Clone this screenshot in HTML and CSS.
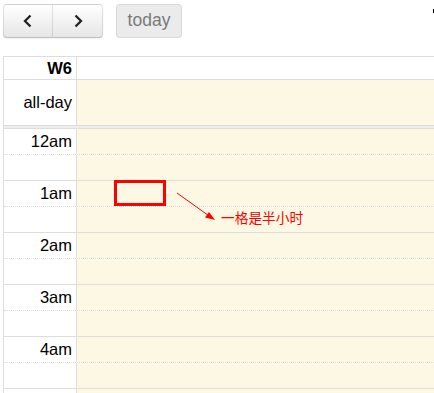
FILE: index.html
```html
<!DOCTYPE html>
<html>
<head>
<meta charset="utf-8">
<link rel="stylesheet" href="styles.css">
</head>
<body>
<div class="cal">
  <div class="toolbar">
    <div class="btn-group">
      <button class="btn nav" aria-label="prev">
        <svg width="12" height="14" viewBox="0 0 12 14"><path d="M8.5 1.5 L3 7 L8.5 12.5" fill="none" stroke="#222" stroke-width="2.3"/></svg>
      </button>
      <button class="btn nav" aria-label="next">
        <svg width="12" height="14" viewBox="0 0 12 14"><path d="M3.5 1.5 L9 7 L3.5 12.5" fill="none" stroke="#222" stroke-width="2.3"/></svg>
      </button>
    </div>
    <button class="btn today" disabled>today</button>
    <span class="title-edge"></span>
  </div>

  <div class="grid">
    <div class="row head">
      <div class="axis wk">W6</div>
      <div class="day"></div>
    </div>
    <div class="row allday">
      <div class="axis">all-day</div>
      <div class="day today-col"></div>
    </div>
    <div class="divider"></div>
    <div class="slots">
      <div class="slot hour"><div class="axis">12am</div><div class="day today-col"></div></div>
      <div class="slot half"><div class="axis"></div><div class="day today-col"></div></div>
      <div class="slot hour"><div class="axis">1am</div><div class="day today-col"></div></div>
      <div class="slot half"><div class="axis"></div><div class="day today-col"></div></div>
      <div class="slot hour"><div class="axis">2am</div><div class="day today-col"></div></div>
      <div class="slot half"><div class="axis"></div><div class="day today-col"></div></div>
      <div class="slot hour"><div class="axis">3am</div><div class="day today-col"></div></div>
      <div class="slot half"><div class="axis"></div><div class="day today-col"></div></div>
      <div class="slot hour"><div class="axis">4am</div><div class="day today-col"></div></div>
      <div class="slot half"><div class="axis"></div><div class="day today-col"></div></div>
      <div class="slot hour"><div class="axis"></div><div class="day today-col"></div></div>

      <div class="mark-box"></div>
      <svg class="mark-arrow" width="50" height="34" viewBox="0 0 50 34">
        <line x1="1" y1="1" x2="36" y2="26" stroke="#f00" stroke-width="1"/>
        <polygon points="39,28 29,25.5 33,20" fill="#f00"/>
      </svg>
      <div class="mark-note">一格是半小时</div>
    </div>
  </div>
</div>
</body>
</html>
```

FILE: styles.css
```css
html, body {
  margin: 0;
  padding: 0;
  overflow: hidden;
  background: #fff;
}
body {
  font-family: "Liberation Sans", Arial, sans-serif;
  font-size: 16px;
  color: #000;
}
.cal {
  padding: 4px 0 0 3px;
  width: 440px;
}
.toolbar {
  display: flex;
  align-items: flex-start;
  height: 34px;
  margin-bottom: 18px;
  position: relative;
}
.btn-group {
  display: flex;
}
.btn {
  font-family: "Liberation Sans", Arial, sans-serif;
  font-size: 17px;
  height: 34px;
  margin: 0;
  padding: 0;
  box-sizing: border-box;
  border: 1px solid rgba(0,0,0,0.1);
  border-bottom-color: rgba(0,0,0,0.25);
  background-color: #f5f5f5;
  background-image: linear-gradient(to bottom, #fff, #e6e6e6);
  color: #333;
  box-shadow: inset 0 1px 0 rgba(255,255,255,0.2), 0 1px 2px rgba(0,0,0,0.05);
  display: flex;
  align-items: center;
  justify-content: center;
}
.nav {
  width: 50px;
}
.nav:first-child {
  border-radius: 4px 0 0 4px;
}
.nav:last-child {
  border-radius: 0 4px 4px 0;
  margin-left: -1px;
  width: 51px;
}
.today {
  margin-left: 13px;
  width: 66px;
  border-radius: 4px;
  background-image: none;
  background-color: #ebebeb;
  color: #7a7a7a;
  border-color: rgba(0,0,0,0.08);
  box-shadow: none;
  padding-bottom: 2px;
  font-size: 17.5px;
}
.title-edge {
  position: absolute;
  left: 430px;
  top: 5px;
  width: 2px;
  height: 4px;
  background: #000;
}

.grid {
  width: 432px;
  border: 1px solid #ddd;
  border-bottom: none;
  box-sizing: border-box;
}
.row, .slot {
  display: flex;
}
.axis {
  flex: none;
  border-right: 1px solid #ddd;
  padding-right: 4px;
  box-sizing: border-box;
  width: 73px;
  display: flex;
  align-items: center;
  justify-content: flex-end;
  font-size: 16.5px;
}
.day {
  flex: 1;
}
.today-col {
  background: #fcf8e3;
}
.head {
  height: 22px;
  border-bottom: 1px solid #ddd;
}
.wk {
  font-weight: bold;
}
.allday {
  height: 45px;
}
.divider {
  height: 2px;
  background: #eee;
  border-top: 1px solid #ddd;
  border-bottom: 1px solid #ddd;
}
.slots {
  position: relative;
}
.slot {
  height: 26px;
  box-sizing: border-box;
  border-top: 1px solid #ddd;
}
.slot:first-child {
  border-top: none;
  height: 25px;
}
.slot.half {
  border-top: 1px dotted #ddd;
}
.mark-box {
  position: absolute;
  left: 110px;
  top: 51px;
  width: 52px;
  height: 26px;
  box-sizing: border-box;
  border: 3px solid #f00;
}
.mark-arrow {
  position: absolute;
  left: 172px;
  top: 63px;
}
.mark-note {
  position: absolute;
  left: 217px;
  top: 80px;
  font-family: "Noto Sans CJK SC", sans-serif;
  font-size: 13.7px;
  line-height: 16px;
  color: #f00;
}
```
